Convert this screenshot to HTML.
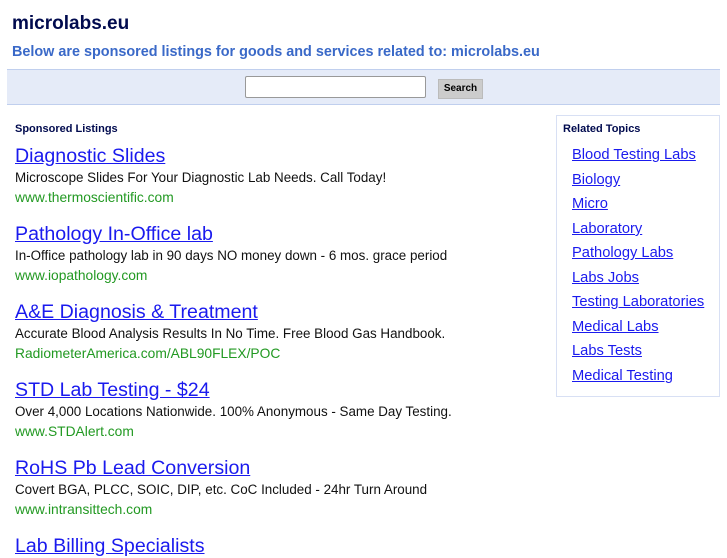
<!DOCTYPE html>
<html><head><meta charset="utf-8"><style>
body{margin:0;width:727px;height:545px;overflow:hidden;background:#fff;font-family:"Liberation Sans",Arial,sans-serif;position:relative}
.a{position:absolute;white-space:nowrap}
h1{position:absolute;left:12px;top:13px;margin:0;font-size:19px;font-weight:bold;color:#000a4e}
.sub{left:12px;top:44px;font-size:14.4px;font-weight:bold;color:#3a69c8}
.band{position:absolute;left:7px;top:69px;width:713px;height:34px;background:#e5ebf8;border-top:1px solid #c0cfee;border-bottom:1px solid #c0cfee}
.inp{position:absolute;left:245px;top:76px;width:179px;height:20px;background:#fff;border:1px solid #999;border-radius:2px}
.btn{position:absolute;left:438px;top:79px;width:43px;height:18px;background:#ccc;border:1px solid #bbb;font-size:10px;font-weight:bold;text-align:center;line-height:18px;color:#000}
.sl{left:15px;top:123px;font-size:11px;font-weight:bold;color:#000a4e}
.t{font-size:19.6px;color:#1a1aee;text-decoration:underline;left:15px}
.d{font-size:13.4px;color:#111;left:15px}
.u{font-size:13.8px;color:#229922;left:15px}
.box{position:absolute;left:556px;top:115px;width:162px;height:280px;border:1px solid #d8e0f4}
.rt{left:563px;top:123px;font-size:11px;font-weight:bold;color:#000a4e}
.r{left:572px;font-size:14.7px;color:#1a1aee;text-decoration:underline}
</style></head><body>
<h1>microlabs.eu</h1>
<div class="a sub">Below are sponsored listings for goods and services related to: microlabs.eu</div>
<div class="band"></div>
<div class="inp"></div>
<div class="btn">Search</div>
<div class="a sl">Sponsored Listings</div>

<div class="a t" style="top:145px">Diagnostic Slides</div>
<div class="a d" style="top:170px">Microscope Slides For Your Diagnostic Lab Needs. Call Today!</div>
<div class="a u" style="top:190px">www.thermoscientific.com</div>

<div class="a t" style="top:223px">Pathology In-Office lab</div>
<div class="a d" style="top:248px">In-Office pathology lab in 90 days NO money down - 6 mos. grace period</div>
<div class="a u" style="top:268px">www.iopathology.com</div>

<div class="a t" style="top:301px">A&amp;E Diagnosis &amp; Treatment</div>
<div class="a d" style="top:326px">Accurate Blood Analysis Results In No Time. Free Blood Gas Handbook.</div>
<div class="a u" style="top:346px">RadiometerAmerica.com/ABL90FLEX/POC</div>

<div class="a t" style="top:379px">STD Lab Testing - $24</div>
<div class="a d" style="top:404px">Over 4,000 Locations Nationwide. 100% Anonymous - Same Day Testing.</div>
<div class="a u" style="top:424px">www.STDAlert.com</div>

<div class="a t" style="top:457px">RoHS Pb Lead Conversion</div>
<div class="a d" style="top:482px">Covert BGA, PLCC, SOIC, DIP, etc. CoC Included - 24hr Turn Around</div>
<div class="a u" style="top:502px">www.intransittech.com</div>

<div class="a t" style="top:535px">Lab Billing Specialists</div>

<div class="box"></div>
<div class="a rt">Related Topics</div>
<div class="a r" style="top:147px">Blood Testing Labs</div>
<div class="a r" style="top:172px">Biology</div>
<div class="a r" style="top:196px">Micro</div>
<div class="a r" style="top:221px">Laboratory</div>
<div class="a r" style="top:245px">Pathology Labs</div>
<div class="a r" style="top:270px">Labs Jobs</div>
<div class="a r" style="top:294px">Testing Laboratories</div>
<div class="a r" style="top:319px">Medical Labs</div>
<div class="a r" style="top:343px">Labs Tests</div>
<div class="a r" style="top:368px">Medical Testing</div>
</body></html>
